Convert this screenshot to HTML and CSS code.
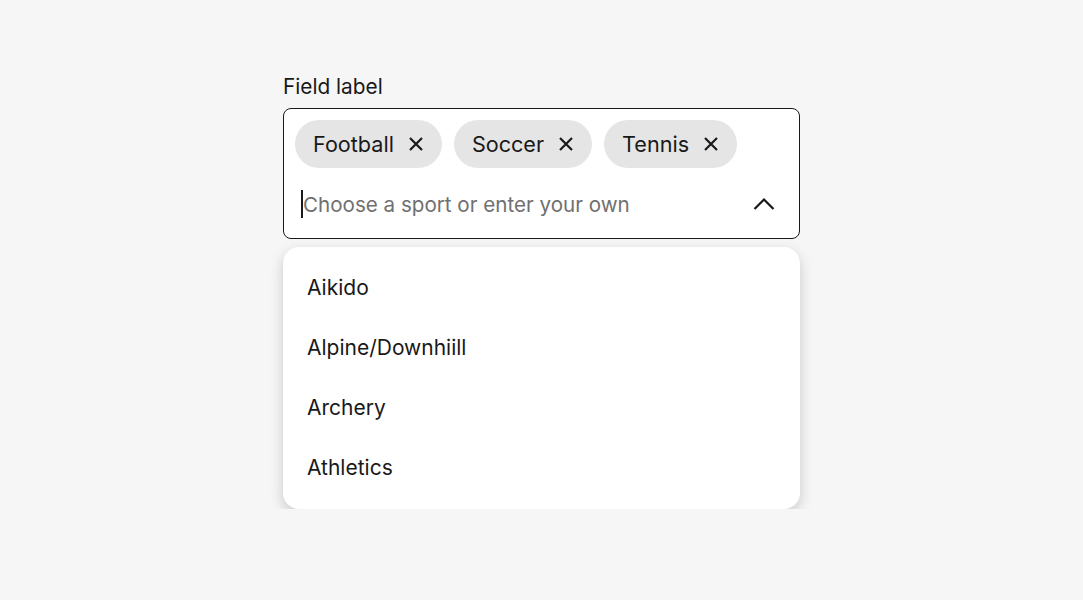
FILE: index.html
```html
<!DOCTYPE html>
<html lang="en">
<head>
    <meta charset="UTF-8">
    <title>Sport picker</title>
    <link rel="stylesheet" href="styles.css">
</head>
<body>
    <div class="field">
        <label class="field-label" for="sportInput">Field label</label>

        <div class="combo">
            <div class="chips">
                <span class="chip">Football
                    <svg class="chip-x" viewBox="0 0 16 16"><path d="M2 2 L14 14 M14 2 L2 14"/></svg>
                </span>
                <span class="chip">Soccer
                    <svg class="chip-x" viewBox="0 0 16 16"><path d="M2 2 L14 14 M14 2 L2 14"/></svg>
                </span>
                <span class="chip">Tennis
                    <svg class="chip-x" viewBox="0 0 16 16"><path d="M2 2 L14 14 M14 2 L2 14"/></svg>
                </span>
            </div>

            <div class="input-row">
                <span class="caret"></span>
                <input id="sportInput" type="text" placeholder="Choose a sport or enter your own">
                <svg class="chevron" viewBox="0 0 24 24"><path d="M2.5 17 L12 7.5 L21.5 17"/></svg>
            </div>
        </div>

        <ul class="menu">
            <li>Aikido</li>
            <li>Alpine/Downhiill</li>
            <li>Archery</li>
            <li>Athletics</li>
        </ul>
    </div>
</body>
</html>
```

FILE: styles.css
```css
body {
    margin: 0;
    background-color: #f6f6f6;
    font-family: Inter, "Open Sans", Arial, sans-serif;
    color: #191919;
}
.field {
    width: 517px;
    margin: 0 auto;
    padding-top: 73px;
}
.field-label {
    display: block;
    font-size: 20.8px;
    line-height: 28px;
    margin-bottom: 7px;
}
.combo {
    background-color: white;
    border: 1.5px solid #191919;
    border-radius: 8px;
    padding: 11px 11px 10px 11px;
}
.chips {
    display: flex;
    gap: 12px;
}
.chip {
    display: inline-flex;
    align-items: center;
    gap: 14px;
    height: 48px;
    padding: 0 18px;
    border-radius: 24px;
    background-color: #e5e5e5;
    font-size: 21.6px;
}
.chip-x {
    width: 16px;
    height: 16px;
    fill: none;
    stroke: #191919;
    stroke-width: 2.2;
}
.input-row {
    display: flex;
    align-items: center;
    height: 48px;
    margin-top: 12px;
    padding: 0 12px 0 6px;
}
.caret {
    width: 2px;
    height: 28px;
    background-color: #191919;
}
.input-row input {
    flex: 1;
    border: none;
    outline: none;
    background: transparent;
    padding: 0;
    font-family: inherit;
    font-size: 20.6px;
    color: #191919;
}
.input-row input::placeholder {
    color: #707070;
}
.chevron {
    width: 24px;
    height: 24px;
    fill: none;
    stroke: #191919;
    stroke-width: 2.2;
}
.menu {
    list-style: none;
    margin: 8px 0 0 0;
    padding: 11px 0;
    background-color: white;
    border-radius: 16px;
    box-shadow: 0 5px 14px rgba(0,0,0,0.18);
}
.menu li {
    height: 60px;
    line-height: 60px;
    padding: 0 24px;
    font-size: 21px;
}
```
